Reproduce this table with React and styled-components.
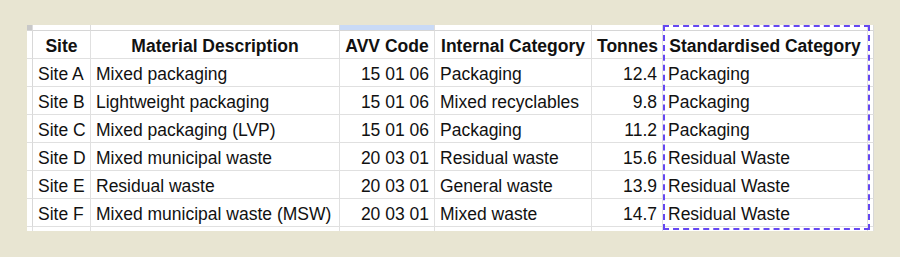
import React from "react";
import styled, { createGlobalStyle } from "styled-components";

const GlobalStyle = createGlobalStyle`
  html, body {
    margin: 0;
    background: #e8e5d2;
  }
  body {
    font-family: "Liberation Sans", Arial, sans-serif;
  }
`;

const Page = styled.div`
  width: 900px;
  height: 257px;
  padding: 25px 0 0 27px;
  box-sizing: border-box;
`;

const COLS = [6, 58, 249, 95, 157, 71, 205, 6];

const Sheet = styled.div`
  position: relative;
  display: grid;
  grid-template-columns: ${COLS.map((c) => `${c}px`).join(" ")};
  grid-template-rows: 6px repeat(7, 28px) 4px;
  width: ${COLS.reduce((a, b) => a + b, 0)}px;
  background: #fff;
`;

const Cell = styled.div`
  box-sizing: border-box;
  border-right: 1px solid #e0e0e0;
  border-bottom: 1px solid #e0e0e0;
  padding: 4px 5px 0;
  font-size: 17.5px;
  line-height: 23px;
  color: #111;
  white-space: nowrap;
  overflow: hidden;
  text-align: ${(p) => p.$align || "left"};
  font-weight: ${(p) => (p.$bold ? 700 : 400)};
`;

const Strip = styled.div`
  box-sizing: border-box;
  border-right: 1px solid #dcdcdc;
  border-bottom: 1px solid #d6d6d6;
  background: ${(p) => (p.$active ? "#c9daf6" : p.$corner ? "#c8c8c8" : "#fff")};
`;

const Gutter = styled.div`
  box-sizing: border-box;
  border-right: 1px solid #d8d8d8;
  border-bottom: 1px solid #e0e0e0;
`;

const Tail = styled.div`
  box-sizing: border-box;
  border-right: 1px solid #e0e0e0;
`;

const Selection = styled.div`
  position: absolute;
  left: 636px;
  top: 0;
  width: 207px;
  height: 205px;
  box-sizing: border-box;
  border: 2px dashed #6547f2;
  pointer-events: none;
`;

const headers = [
  "Site",
  "Material Description",
  "AVV Code",
  "Internal Category",
  "Tonnes",
  "Standardised Category",
];

const rows = [
  ["Site A", "Mixed packaging", "15 01 06", "Packaging", "12.4", "Packaging"],
  ["Site B", "Lightweight packaging", "15 01 06", "Mixed recyclables", "9.8", "Packaging"],
  ["Site C", "Mixed packaging (LVP)", "15 01 06", "Packaging", "11.2", "Packaging"],
  ["Site D", "Mixed municipal waste", "20 03 01", "Residual waste", "15.6", "Residual Waste"],
  ["Site E", "Residual waste", "20 03 01", "General waste", "13.9", "Residual Waste"],
  ["Site F", "Mixed municipal waste (MSW)", "20 03 01", "Mixed waste", "14.7", "Residual Waste"],
];

const align = ["left", "left", "right", "left", "right", "left"];

export default function App() {
  return (
    <>
      <GlobalStyle />
      <Page>
        <Sheet>
          <Strip $corner />
          {headers.map((h, i) => (
            <Strip key={h} $active={i === 2} />
          ))}
          <Strip />

          <Gutter />
          {headers.map((h) => (
            <Cell key={h} $bold $align="center">
              {h}
            </Cell>
          ))}
          <Gutter />

          {rows.map((r) => (
            <React.Fragment key={r[0]}>
              <Gutter />
              {r.map((v, i) => (
                <Cell key={i} $align={align[i]}>
                  {v}
                </Cell>
              ))}
              <Gutter />
            </React.Fragment>
          ))}

          {COLS.map((c, i) => (
            <Tail key={i} />
          ))}
          <Selection />
        </Sheet>
      </Page>
    </>
  );
}
